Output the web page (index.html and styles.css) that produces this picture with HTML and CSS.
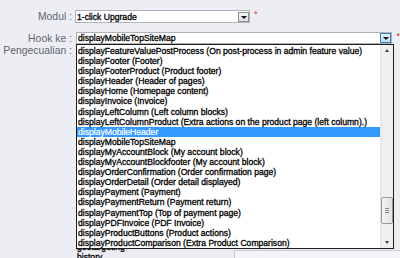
FILE: index.html
```html
<!DOCTYPE html>
<html lang="id">
<head>
    <meta charset="UTF-8">
    <meta name="viewport" content="width=device-width, initial-scale=1.0">
    <title>Transplantasi modul</title>
    <link rel="stylesheet" href="styles.css">
</head>
<body>
    <div class="form">
        <div class="row row-modul">
            <label class="lbl">Modul :</label>
            <div class="select sel-modul">
                <span class="val">1-click Upgrade</span>
                <span class="btn"><span class="tri"></span></span>
            </div>
            <span class="req">*</span>
        </div>

        <div class="row row-hook">
            <label class="lbl">Hook ke :</label>
            <div class="select sel-hook">
                <span class="val">displayMobileTopSiteMap</span>
                <span class="btn btn-active"><span class="tri"></span></span>

                <div class="popup">
                    <ul class="options">
                        <li>displayFeatureValuePostProcess (On post-process in admin feature value)</li>
                        <li>displayFooter (Footer)</li>
                        <li>displayFooterProduct (Product footer)</li>
                        <li>displayHeader (Header of pages)</li>
                        <li>displayHome (Homepage content)</li>
                        <li>displayInvoice (Invoice)</li>
                        <li>displayLeftColumn (Left column blocks)</li>
                        <li>displayLeftColumnProduct (Extra actions on the product page (left column).)</li>
                        <li class="selected">displayMobileHeader</li>
                        <li>displayMobileTopSiteMap</li>
                        <li>displayMyAccountBlock (My account block)</li>
                        <li>displayMyAccountBlockfooter (My account block)</li>
                        <li>displayOrderConfirmation (Order confirmation page)</li>
                        <li>displayOrderDetail (Order detail displayed)</li>
                        <li>displayPayment (Payment)</li>
                        <li>displayPaymentReturn (Payment return)</li>
                        <li>displayPaymentTop (Top of payment page)</li>
                        <li>displayPDFInvoice (PDF Invoice)</li>
                        <li>displayProductButtons (Product actions)</li>
                        <li>displayProductComparison (Extra Product Comparison)</li>
                    </ul>
                    <div class="scrollbar">
                        <span class="sb-arrow sb-up"></span>
                        <div class="sb-track">
                            <div class="sb-thumb"><span></span><span></span><span></span></div>
                        </div>
                        <span class="sb-arrow sb-down"></span>
                    </div>
                </div>
            </div>
            <span class="req">*</span>
        </div>

        <div class="row row-exc">
            <label class="lbl">Pengecualian :</label>
            <div class="exc">
                <ul class="exc-list">
                    <li>geotargeting</li>
                    <li>history</li>
                </ul>
                <div class="exc-box"></div>
            </div>
        </div>
    </div>
</body>
</html>
```

FILE: styles.css
```css
body {
    margin: 0;
    height: 258px;
    background: #eceef3;
    font-family: "Liberation Sans", Arial, sans-serif;
    color: #000;
    overflow: hidden;
}
.form {
    padding-top: 10px;
}
.row {
    display: flex;
    align-items: center;
}
.lbl {
    width: 76px;
    padding-right: 4px;
    box-sizing: border-box;
    flex: none;
    text-align: right;
    font-size: 10.4px;
    color: #62646f;
    white-space: nowrap;
}
.row-modul {
    height: 13px;
}
.row-modul .lbl {
    width: 75px;
    padding-right: 3px;
}
.row-hook {
    margin-top: 9px;
    height: 12px;
}
.row-exc {
    align-items: flex-start;
}
.row-exc .lbl {
    line-height: 14px;
}

.select {
    position: relative;
    display: flex;
    align-items: center;
    background: #fff;
    border: 1px solid #aeb3bb;
    box-sizing: border-box;
    height: 100%;
    font-size: 8.6px;
    -webkit-text-stroke: 0.3px #000;
}
.sel-modul {
    width: 175px;
}
.sel-hook {
    width: 317px;
}
.val {
    flex: 1;
    padding-left: 1px;
    white-space: nowrap;
}
.btn {
    width: 11px;
    height: 10px;
    box-sizing: border-box;
    border: 1px solid #8e8f93;
    background: linear-gradient(#f6f6f6, #dcdcdc);
    display: flex;
    align-items: center;
    justify-content: center;
}
.btn-active {
    border-color: #3c7fb1;
    background: linear-gradient(#e4f2fb, #bcdcf3);
}
.tri {
    width: 0;
    height: 0;
    border-left: 3px solid transparent;
    border-right: 3px solid transparent;
    border-top: 3px solid #111;
    margin-top: 1px;
}
.req {
    color: #e0202a;
    font-size: 9px;
    margin-left: 4px;
    align-self: flex-start;
    line-height: 8px;
}

/* open dropdown of the hook select */
.popup {
    position: absolute;
    left: -1px;
    top: 11px;
    width: 318px;
    height: 205px;
    box-sizing: border-box;
    border: 1px solid #1d1d1d;
    background: #fff;
    display: flex;
    z-index: 5;
}
.options {
    list-style: none;
    margin: 0;
    padding: 1px 0 0;
    flex: 1;
}
.options li {
    height: 10.1px;
    line-height: 10.1px;
    padding-left: 1px;
    white-space: nowrap;
}
.options li.selected {
    background: #3399ff;
    color: #fff;
    -webkit-text-stroke: 0.2px #fff;
}
.scrollbar {
    width: 12px;
    display: flex;
    flex-direction: column;
    background: #efefef;
    border-left: 1px solid #e2e2e2;
}
.sb-arrow {
    height: 11px;
    display: flex;
    align-items: center;
    justify-content: center;
}
.sb-arrow::after {
    content: "";
    border-left: 2.5px solid transparent;
    border-right: 2.5px solid transparent;
}
.sb-up::after {
    border-bottom: 3px solid #444;
}
.sb-down::after {
    border-top: 3px solid #444;
}
.sb-track {
    flex: 1;
    padding-top: 141px;
}
.sb-thumb {
    height: 27px;
    box-sizing: border-box;
    border: 1px solid #979797;
    border-radius: 2px;
    background: linear-gradient(90deg, #f4f4f4, #e2e2e2);
    display: flex;
    flex-direction: column;
    align-items: center;
    justify-content: center;
    gap: 1px;
}
.sb-thumb span {
    width: 4px;
    height: 1px;
    background: #8a8a8a;
}

/* module list under the popup */
.exc {
    flex: 1;
    display: flex;
}
.exc-list {
    list-style: none;
    margin: 0;
    padding: 198px 0 0 1px;
    width: 157px;
    font-size: 8.6px;
    -webkit-text-stroke: 0.3px #000;
}
.exc-list li {
    height: 10.1px;
    line-height: 10.1px;
}
.exc-box {
    flex: 1;
    margin-top: 206px;
    height: 8px;
    background: #f4f5f8;
    border-left: 1px solid #c9ccd3;
    border-top: 1px solid #c9ccd3;
}
```
